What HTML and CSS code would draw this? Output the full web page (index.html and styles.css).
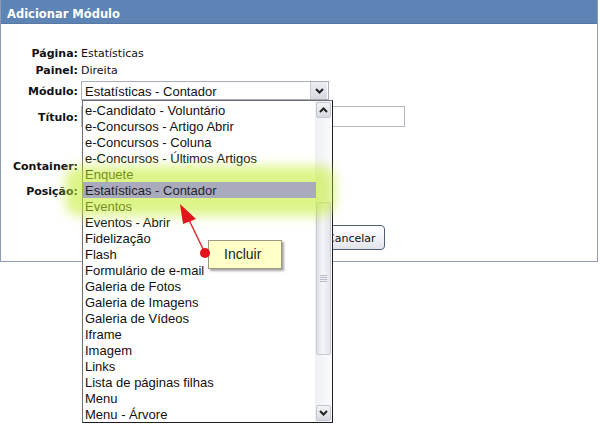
FILE: index.html
```html
<!DOCTYPE html>
<html lang="pt">
<head>
<meta charset="utf-8">
<title>Adicionar Módulo</title>
<link rel="stylesheet" href="styles.css">
</head>
<body>
<div class="panel">
  <div class="header">Adicionar Módulo</div>
  <div class="form">
    <div class="row r1"><span class="label">Página:</span><span class="value">Estatísticas</span></div>
    <div class="row r2"><span class="label">Painel:</span><span class="value">Direita</span></div>
    <div class="row r3"><span class="label">Módulo:</span>
      <div class="select">
        <span class="select-text">Estatísticas - Contador</span>
        <span class="select-btn"><svg width="9" height="6" viewBox="0 0 9 6"><polyline points="1,1 4.5,4.5 8,1" fill="none" stroke="#222" stroke-width="2"/></svg></span>
      </div>
    </div>
    <div class="row r4"><span class="label">Título:</span><div class="input"></div></div>
    <div class="row r5"><span class="label">Container:</span><div class="small-select"></div></div>
    <div class="row r6"><span class="label">Posição:</span><div class="small-select"></div></div>
    <div class="row r7"><span class="label"></span>
      <div class="buttons"><span class="btn btn-hidden">Adicionar</span><span class="btn">Cancelar</span></div>
    </div>
  </div>
</div>

<div class="dropdown">
  <div class="glow"></div>
  <div class="items">
    <div class="item">e-Candidato - Voluntário</div>
    <div class="item">e-Concursos - Artigo Abrir</div>
    <div class="item">e-Concursos - Coluna</div>
    <div class="item">e-Concursos - Últimos Artigos</div>
    <div class="item">Enquete</div>
    <div class="item selected">Estatísticas - Contador</div>
    <div class="item">Eventos</div>
    <div class="item">Eventos - Abrir</div>
    <div class="item">Fidelização</div>
    <div class="item">Flash</div>
    <div class="item">Formulário de e-mail</div>
    <div class="item">Galeria de Fotos</div>
    <div class="item">Galeria de Imagens</div>
    <div class="item">Galeria de Vídeos</div>
    <div class="item">Iframe</div>
    <div class="item">Imagem</div>
    <div class="item">Links</div>
    <div class="item">Lista de páginas filhas</div>
    <div class="item">Menu</div>
    <div class="item">Menu - Árvore</div>
  </div>
  <div class="scrollbar">
    <div class="sb-btn"><svg width="9" height="6" viewBox="0 0 9 6"><polyline points="1,5 4.5,1.5 8,5" fill="none" stroke="#222" stroke-width="2"/></svg></div>
    <div class="sb-track"><div class="sb-thumb"><span class="grip"></span></div></div>
    <div class="sb-btn"><svg width="9" height="6" viewBox="0 0 9 6"><polyline points="1,1 4.5,4.5 8,1" fill="none" stroke="#222" stroke-width="2"/></svg></div>
  </div>
</div>

<svg class="arrow" width="60" height="70" viewBox="170 198 60 70">
  <line x1="189" y1="220" x2="205" y2="253" stroke="#d8262a" stroke-width="1.4"/>
  <polygon points="180,204 183,224 196,219" fill="#e0161c"/>
  <circle cx="205" cy="253" r="5" fill="#e0161c"/>
</svg>
<div class="tip">Incluir</div>
</body>
</html>
```

FILE: styles.css
```css
html, body {
  margin: 0;
  padding: 0;
  background: #fff;
  overflow: hidden;
}
body {
  width: 600px;
  height: 424px;
  position: relative;
  font-family: "DejaVu Sans", Verdana, sans-serif;
}
.panel {
  width: 598px;
  height: 262px;
  box-sizing: border-box;
  border: 1px solid #8e9db6;
  border-top: none;
}
.header {
  height: 24px;
  padding-top: 4px;
  line-height: 20px;
  background: #5d84b5;
  color: #fff;
  font-weight: bold;
  font-size: 11.5px;
  padding-left: 6px;
  border-bottom: 1px solid #5878a4;
  box-sizing: border-box;
}
.form {
  padding-top: 20px;
}
.row {
  display: flex;
  align-items: center;
}
.label {
  width: 77px;
  text-align: right;
  font-weight: bold;
  font-size: 11px;
  color: #111;
  padding-right: 3px;
  padding-top: 2px;
  box-sizing: content-box;
  flex: none;
}
.value {
  font-size: 11px;
  color: #111;
  padding-top: 2px;
}
.r1 { height: 17px; }
.r2 { height: 17px; }
.r3 { height: 19px; margin-top: 3px; }
.r4 { height: 21px; margin-top: 6px; }
.r5 { height: 20px; margin-top: 28px; }
.r6 { height: 20px; margin-top: 5px; }
.r7 { height: 25px; margin-top: 25px; }
.r3 .label, .r4 .label { padding-right: 2px; }
.select {
  width: 248px;
  height: 19px;
  box-sizing: border-box;
  border: 1px solid #a7aeb8;
  margin-left: 1px;
  display: flex;
  align-items: center;
  justify-content: space-between;
  background: #fff;
}
.select-text {
  font-family: "Liberation Sans", Arial, sans-serif;
  font-size: 13px;
  color: #111;
  padding-left: 3px;
  padding-top: 1px;
}
.select-btn {
  width: 16px;
  height: 17px;
  margin-right: 1px;
  background: linear-gradient(#eceef2, #d6d9e0);
  border-left: 1px solid #c9ccd3;
  display: flex;
  align-items: center;
  justify-content: center;
}
.input {
  width: 324px;
  height: 21px;
  box-sizing: border-box;
  border: 1px solid #b4b8bf;
  margin-left: 1px;
}
.small-select {
  width: 180px;
  height: 19px;
  border: 1px solid #a7aeb8;
  margin-left: 2px;
}
.buttons {
  display: flex;
  gap: 6px;
  padding-left: 160px;
}
.btn {
  display: inline-flex;
  align-items: center;
  justify-content: center;
  height: 25px;
  box-sizing: border-box;
  padding: 1px 8px 0 9px;
  border: 1px solid #4f5f7a;
  border-radius: 4px;
  background: linear-gradient(#ffffff, #eef0f5 60%, #dfe3ea);
  font-size: 11px;
  color: #111;
}
.btn-hidden { width: 70px; }

.dropdown {
  position: absolute;
  left: 82px;
  top: 100px;
  width: 251px;
  height: 323px;
  box-sizing: border-box;
  border: 1px solid #1e1e1e;
  border-left-color: #6f6f6f;
  border-top-color: #6f6f6f;
  background: #fff;
}
.items {
  width: 233px;
  padding-top: 1px;
}
.item {
  height: 16px;
  line-height: 18px;
  padding-left: 2px;
  font-family: "Liberation Sans", Arial, sans-serif;
  font-size: 13px;
  color: #111;
  white-space: nowrap;
}
.item.selected {
  position: relative;
  z-index: 3;
  background: #a9abbc;
  color: #23232e;
}
.glow {
  position: absolute;
  left: -18px;
  top: 65px;
  width: 270px;
  height: 50px;
  border-radius: 14px;
  background: rgba(196, 238, 50, 0.58);
  filter: blur(6px);
  z-index: 2;
}
.scrollbar {
  position: absolute;
  right: 0;
  top: 0;
  bottom: 0;
  width: 17px;
  display: flex;
  flex-direction: column;
  background: linear-gradient(90deg, #eef0f4, #fbfbfd);
}
.sb-btn {
  height: 16px;
  margin: 1px 1px 0 1px;
  border: 1px solid #c3c7d0;
  border-radius: 2px;
  background: linear-gradient(#f2f3f6, #d7dae2);
  display: flex;
  align-items: center;
  justify-content: center;
  flex: none;
  box-sizing: border-box;
}
.sb-btn:last-child { margin: 0 1px 1px 1px; }
.sb-track {
  flex: 1;
  position: relative;
}
.sb-thumb {
  position: absolute;
  left: 1px;
  right: 1px;
  top: 84px;
  height: 153px;
  box-sizing: border-box;
  border: 1px solid #c7cad3;
  border-radius: 2px;
  background: linear-gradient(90deg, #dfe1e8, #f4f5f8 45%, #e3e5eb);
  display: flex;
  align-items: center;
  justify-content: center;
}
.grip {
  width: 7px;
  height: 7px;
  background: repeating-linear-gradient(#b9bcc6 0 1px, transparent 1px 2px);
}
.arrow {
  position: absolute;
  left: 170px;
  top: 198px;
  z-index: 5;
}
.tip {
  position: absolute;
  left: 208px;
  top: 240px;
  width: 74px;
  height: 29px;
  box-sizing: border-box;
  border: 1px solid #9c9a80;
  background: #ffffc8;
  box-shadow: 2px 2px 2px rgba(0, 0, 0, 0.35);
  font-family: "Liberation Sans", Arial, sans-serif;
  font-size: 14px;
  line-height: 27px;
  padding-left: 15px;
  color: #222;
  z-index: 4;
}
```
